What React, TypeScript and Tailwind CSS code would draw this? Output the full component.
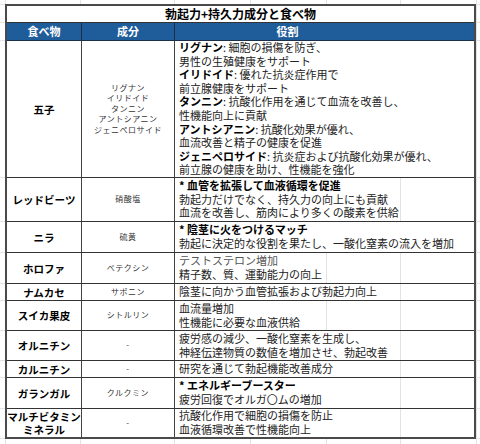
import React from "react";

type Row = {
  food: React.ReactNode;
  part: React.ReactNode;
  role: React.ReactNode;
  h: string;
  grid: string[];
};

const B = ({ children }: { children: React.ReactNode }) => (
  <span className="font-bold text-black">{children}</span>
);

// faint sheet gridlines that show through the role column where the text stops short
const G1 = "left-[151px]";
const G2 = "left-[225px]";

const rows: Row[] = [
  {
    food: "五子",
    part: (
      <>
        リグナン
        <br />
        イリドイド
        <br />
        タンニン
        <br />
        アントシアニン
        <br />
        ジェニペロサイド
      </>
    ),
    role: (
      <>
        <B>リグナン</B>: 細胞の損傷を防ぎ、
        <br />
        男性の生殖健康をサポート
        <br />
        <B>イリドイド</B>: 優れた抗炎症作用で
        <br />
        前立腺健康をサポート
        <br />
        <B>タンニン</B>: 抗酸化作用を通じて血流を改善し、
        <br />
        性機能向上に貢献
        <br />
        <B>アントシアニン</B>: 抗酸化効果が優れ、
        <br />
        血流改善と精子の健康を促進
        <br />
        <B>ジェニペロサイド</B>: 抗炎症および抗酸化効果が優れ、
        <br />
        前立腺の健康を助け、性機能を強化
      </>
    ),
    h: "h-[137px]",
    grid: [],
  },
  {
    food: "レッドビーツ",
    part: "硝酸塩",
    role: (
      <>
        <B>* 血管を拡張して血液循環を促進</B>
        <br />
        勃起力だけでなく、持久力の向上にも貢献
        <br />
        血流を改善し、筋肉により多くの酸素を供給
      </>
    ),
    h: "h-[44px]",
    grid: [G2],
  },
  {
    food: "ニラ",
    part: "硫黄",
    role: (
      <>
        <B>* 陰茎に火をつけるマッチ</B>
        <br />
        勃起に決定的な役割を果たし、一酸化窒素の流入を増加
      </>
    ),
    h: "h-[31px]",
    grid: [],
  },
  {
    food: "ホロファ",
    part: "ベテクシン",
    role: (
      <>
        <span className="text-[#555]">テストステロン増加</span>
        <br />
        精子数、質、運動能力の向上
      </>
    ),
    h: "h-[31px]",
    grid: [G1, G2],
  },
  {
    food: "ナムカセ",
    part: "サポニン",
    role: "陰茎に向かう血管拡張および勃起力向上",
    h: "h-[17px]",
    grid: [G2],
  },
  {
    food: "スイカ果皮",
    part: "シトルリン",
    role: (
      <>
        血流量増加
        <br />
        性機能に必要な血液供給
      </>
    ),
    h: "h-[30px]",
    grid: [G1, G2],
  },
  {
    food: "オルニチン",
    part: "-",
    role: (
      <>
        疲労感の減少、一酸化窒素を生成し、
        <br />
        神経伝達物質の数値を増加させ、勃起改善
      </>
    ),
    h: "h-[30px]",
    grid: [G2],
  },
  {
    food: "カルニチン",
    part: "-",
    role: "研究を通じて勃起機能改善成分",
    h: "h-[17px]",
    grid: [G2],
  },
  {
    food: "ガランガル",
    part: "クルクミン",
    role: (
      <>
        <B>* エネルギーブースター</B>
        <br />
        疲労回復でオルガ〇ムの増加
      </>
    ),
    h: "h-[31px]",
    grid: [G2],
  },
  {
    food: (
      <>
        マルチビタミン
        <br />
        ミネラル
      </>
    ),
    part: "-",
    role: (
      <>
        抗酸化作用で細胞の損傷を防止
        <br />
        血液循環改善で性機能向上
      </>
    ),
    h: "h-[28px]",
    grid: [G2],
  },
];

const sheetCols = [
  "left-[5px]",
  "left-[80px]",
  "left-[174px]",
  "left-[250px]",
  "left-[326px]",
  "left-[400px]",
  "left-[476px]",
];
const sheetRows = [
  "top-[4px]",
  "top-[22px]",
  "top-[40px]",
  "top-[177px]",
  "top-[221px]",
  "top-[252px]",
  "top-[283px]",
  "top-[300px]",
  "top-[330px]",
  "top-[360px]",
  "top-[377px]",
  "top-[408px]",
  "top-[438px]",
];

export default function App() {
  return (
    <div className="relative w-[480px] h-[444px] overflow-hidden bg-white pt-[4px] pl-[5px] font-['Noto_Sans_CJK_JP','Liberation_Sans',sans-serif] text-[#222]">
      {sheetCols.map((c) => (
        <div key={c} className={`absolute top-0 bottom-0 w-px bg-[#e3e3e3] ${c}`} />
      ))}
      {sheetRows.map((r) => (
        <div key={r} className={`absolute left-0 right-0 h-px bg-[#e3e3e3] ${r}`} />
      ))}

      <div className="relative w-[471px] border-2 border-[#4a4a4a] bg-white">
        <div className="h-[17px] border-b border-[#333] flex items-center justify-center text-[12px] font-bold text-black leading-none">
          勃起力+持久力成分と食べ物
        </div>

        <div className="h-[18px] flex border-b border-[#1b2f4a] bg-[#1f5c9a] text-white text-[11px] font-bold leading-none">
          <div className="w-[75px] border-r border-[#1b2f4a] flex items-center justify-center">
            食べ物
          </div>
          <div className="w-[93px] border-r border-[#1b2f4a] flex items-center justify-center">
            成分
          </div>
          <div className="flex-1">
            <div className="w-[225px] h-full flex items-center justify-center">役割</div>
          </div>
        </div>

        {rows.map((row, i) => (
          <div
            key={i}
            className={`flex ${row.h} ${i < rows.length - 1 ? "border-b border-[#333]" : ""}`}
          >
            <div className="w-[75px] shrink-0 border-r border-[#444] flex items-center justify-center text-center text-[10.5px] leading-[13px] font-bold text-black">
              <div>{row.food}</div>
            </div>
            <div className="w-[93px] shrink-0 border-r border-[#444] flex items-center justify-center text-center text-[8px] leading-[10.5px] tracking-[0.5px] text-[#333]">
              <div>{row.part}</div>
            </div>
            <div className="relative flex-1 flex items-center pl-[4px] text-[11px] leading-[13.6px] whitespace-nowrap">
              {row.grid.map((g) => (
                <div key={g} className={`absolute top-0 bottom-0 w-px bg-[#e3e3e3] ${g}`} />
              ))}
              <div className="relative">{row.role}</div>
            </div>
          </div>
        ))}
      </div>
    </div>
  );
}
